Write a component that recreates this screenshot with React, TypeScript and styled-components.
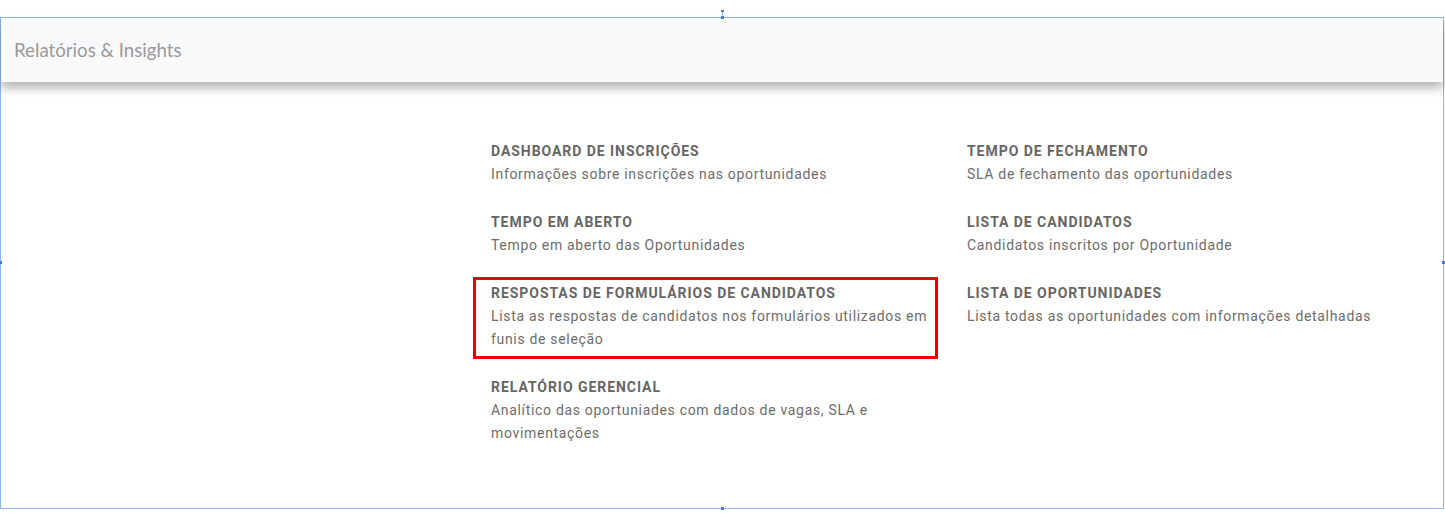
import React from "react";
import styled, { createGlobalStyle } from "styled-components";

const Global = createGlobalStyle`
  html, body { margin: 0; padding: 0; background: #ffffff; }
  body { font-family: Roboto, "Liberation Sans", sans-serif; }
`;

const Page = styled.div`
  width: 1445px;
  height: 521px;
  padding-top: 17px;
  box-sizing: border-box;
`;

const Frame = styled.div`
  position: relative;
  width: 1444px;
  height: 492px;
  box-sizing: border-box;
  border: 1px solid #8fb6ef;
`;

const Handle = styled.span<{ $side: "top" | "bottom" | "left" | "right" }>`
  position: absolute;
  width: 3px;
  height: 3px;
  background: #3f7fe0;
  ${({ $side }) =>
    $side === "top"
      ? "top: -2px; left: 720px;"
      : $side === "bottom"
      ? "bottom: -2px; left: 720px;"
      : $side === "left"
      ? "left: -2px; top: 243px;"
      : "right: -2px; top: 243px;"}
`;

const Stem = styled.span`
  position: absolute;
  top: -8px;
  left: 721px;
  width: 1px;
  height: 7px;
  background: #8fb6ef;
  &::before {
    content: "";
    position: absolute;
    top: 0;
    left: -1px;
    width: 3px;
    height: 2px;
    background: #3f7fe0;
  }
`;

const Header = styled.header`
  height: 64px;
  display: flex;
  align-items: center;
  padding-left: 13px;
  background: #f8f9fb;
  box-shadow: 0 6px 10px rgba(0, 0, 0, 0.3);
  position: relative;
`;

const Title = styled.h1`
  margin: 0;
  font-family: Lato, "Open Sans", sans-serif;
  font-size: 18.7px;
  font-weight: 400;
  color: #9a9a9a;
`;

const Grid = styled.div`
  display: grid;
  grid-template-columns: 440px 440px;
  column-gap: 36px;
  row-gap: 24px;
  padding: 57px 0 0 490px;
  align-items: start;
`;

const Item = styled.div<{ $highlight?: boolean }>`
  position: relative;
  &::after {
    content: "";
    display: ${({ $highlight }) => ($highlight ? "block" : "none")};
    position: absolute;
    top: -4px;
    bottom: -8px;
    left: -18px;
    right: -7px;
    border: 3px solid #ee0000;
  }
`;

const ItemTitle = styled.div`
  font-family: Roboto, sans-serif;
  font-size: 14px;
  font-weight: 700;
  line-height: 24px;
  color: #666666;
  text-transform: uppercase;
  letter-spacing: 0.95px;
`;

const ItemDesc = styled.div`
  font-family: Roboto, sans-serif;
  font-size: 14px;
  font-weight: 400;
  line-height: 23px;
  color: #6c6c6c;
  letter-spacing: 0.68px;
`;

type Report = { title: string; desc: string; highlight?: boolean };

const reports: Report[] = [
  { title: "Dashboard de Inscrições", desc: "Informações sobre inscrições nas oportunidades" },
  { title: "Tempo de Fechamento", desc: "SLA de fechamento das oportunidades" },
  { title: "Tempo em Aberto", desc: "Tempo em aberto das Oportunidades" },
  { title: "Lista de Candidatos", desc: "Candidatos inscritos por Oportunidade" },
  {
    title: "Respostas de Formulários de Candidatos",
    desc: "Lista as respostas de candidatos nos formulários utilizados em funis de seleção",
    highlight: true,
  },
  { title: "Lista de Oportunidades", desc: "Lista todas as oportunidades com informações detalhadas" },
  { title: "Relatório Gerencial", desc: "Analítico das oportuniades com dados de vagas, SLA e movimentações" },
];

export default function App() {
  return (
    <Page>
      <Global />
      <Frame>
        <Header>
          <Title>Relatórios &amp; Insights</Title>
        </Header>
        <Grid>
          {reports.map((r) => (
            <Item key={r.title} $highlight={r.highlight}>
              <ItemTitle>{r.title}</ItemTitle>
              <ItemDesc>{r.desc}</ItemDesc>
            </Item>
          ))}
        </Grid>
        <Stem />
        <Handle $side="top" />
        <Handle $side="bottom" />
        <Handle $side="left" />
        <Handle $side="right" />
      </Frame>
    </Page>
  );
}
